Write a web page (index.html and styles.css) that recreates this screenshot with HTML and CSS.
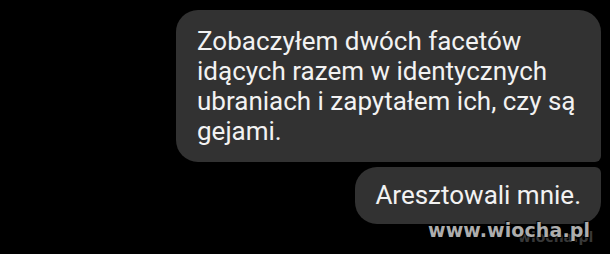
FILE: index.html
```html
<!DOCTYPE html>
<html lang="pl">
<head>
<meta charset="utf-8">
<link rel="stylesheet" href="styles.css">
</head>
<body>
<div class="chat">
  <div class="bubble first">Zobaczyłem dwóch facetów idących razem w identycznych ubraniach i zapytałem ich, czy są gejami.</div>
  <div class="bubble second">Aresztowali mnie.</div>
</div>
<div class="ghost">wiocha.pl</div>
<div class="watermark">www.wiocha.pl</div>
</body>
</html>
```

FILE: styles.css
```css
html, body {
  margin: 0;
  padding: 0;
  background: #000;
}
body {
  width: 610px;
  height: 254px;
  overflow: hidden;
  position: relative;
  font-family: Roboto, "Noto Sans", sans-serif;
}
.chat {
  display: flex;
  flex-direction: column;
  align-items: flex-end;
  gap: 5px;
  padding: 10px 9px 0 0;
}
.bubble {
  background: #323232;
  color: #f2f2f2;
  font-size: 26px;
  line-height: 30px;
  box-sizing: border-box;
}
.first {
  width: 425px;
  padding: 16px 21px 16px 21px;
  border-radius: 22px 22px 6px 22px;
}
.second {
  padding: 13px 20px 14px 20px;
  border-radius: 22px 6px 22px 22px;
}
.watermark {
  position: absolute;
  left: 428px;
  top: 219px;
  font-family: "DejaVu Sans", Verdana, sans-serif;
  font-weight: bold;
  font-size: 19px;
  color: #adadad;
  text-shadow: 1px 1px 1px #000, -1px -1px 1px #000;
  letter-spacing: 0.1px;
}
.ghost {
  position: absolute;
  left: 518px;
  top: 229px;
  font-family: "DejaVu Sans", Verdana, sans-serif;
  font-weight: bold;
  font-size: 14px;
  color: #383838;
}
```
